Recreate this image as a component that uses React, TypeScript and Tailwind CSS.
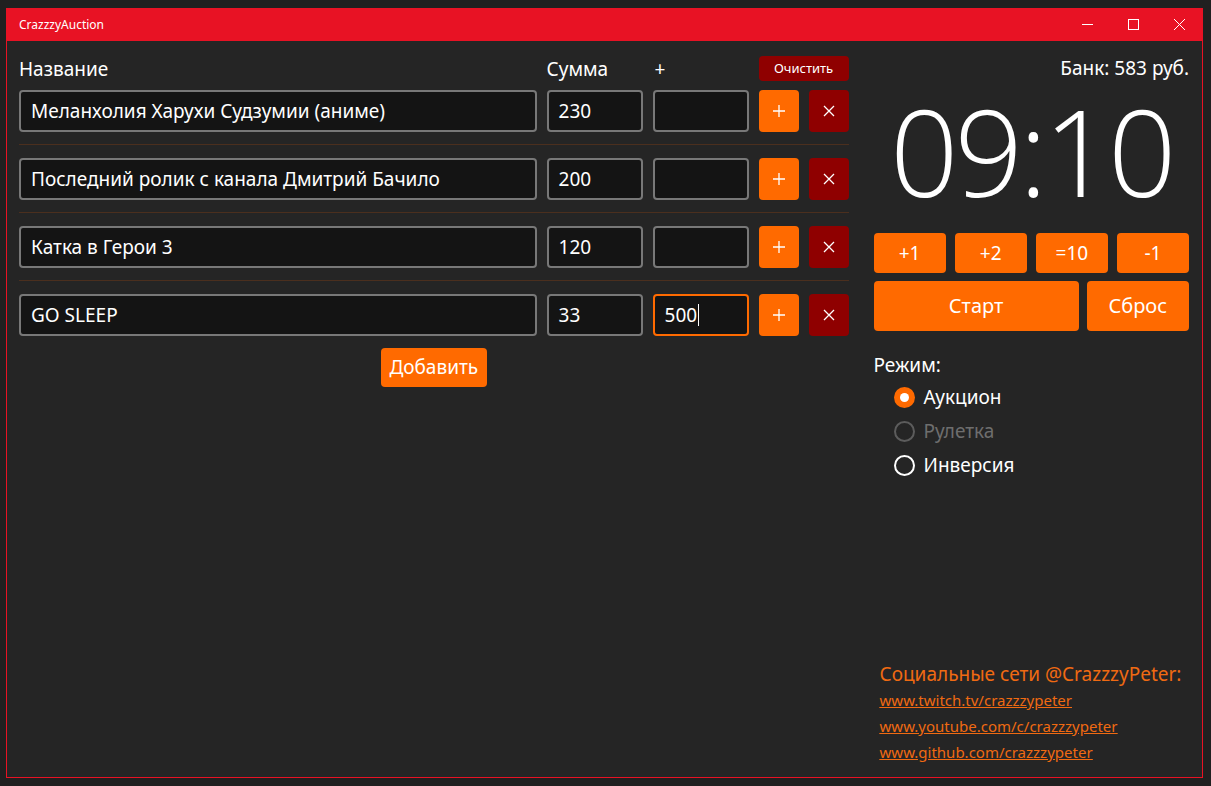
import React from "react";

const ORANGE = "bg-[#ff6a00]";

interface Lot {
  id: number;
  name: string;
  sum: string;
  add: string;
  focused?: boolean;
}

const lots: Lot[] = [
  { id: 1, name: "Меланхолия Харухи Судзумии (аниме)", sum: "230", add: "" },
  { id: 2, name: "Последний ролик с канала Дмитрий Бачило", sum: "200", add: "" },
  { id: 3, name: "Катка в Герои 3", sum: "120", add: "" },
  { id: 4, name: "GO SLEEP", sum: "33", add: "500", focused: true },
];

function Field({ value, focused, caret }: { value: string; focused?: boolean; caret?: boolean }) {
  return (
    <div
      className={`h-[42px] flex items-center px-[10px] rounded-[4px] border-2 bg-[#141414] text-[19px] text-white ${
        focused ? "border-[#ff6a00]" : "border-[#787878]"
      }`}
    >
      <span className="whitespace-nowrap">{value}</span>
      {caret && <span className="w-px h-[22px] bg-white ml-px" />}
    </div>
  );
}

function LotRow({ lot, last }: { lot: Lot; last: boolean }) {
  return (
    <div>
      <div className="grid grid-cols-[1fr_96px_96px_40px_40px] gap-[10px]">
        <Field value={lot.name} />
        <Field value={lot.sum} />
        <Field value={lot.add} focused={lot.focused} caret={lot.focused} />
        <button className={`h-[42px] rounded-[4px] ${ORANGE} flex items-center justify-center`}>
          <svg width="14" height="14" viewBox="0 0 14 14" stroke="white" strokeWidth="1.3">
            <path d="M7 1v12M1 7h12" />
          </svg>
        </button>
        <button className="h-[42px] rounded-[4px] bg-[#8f0000] flex items-center justify-center">
          <svg width="12" height="12" viewBox="0 0 12 12" stroke="white" strokeWidth="1.3">
            <path d="M1 1l10 10M11 1L1 11" />
          </svg>
        </button>
      </div>
      {!last && <div className="h-px bg-[#4b2f1e] mt-[12px] mb-[13px]" />}
    </div>
  );
}

function Radio({ label, state }: { label: string; state: "on" | "off" | "disabled" }) {
  return (
    <div className="h-[34px] flex items-center gap-[9px] pl-[20px]">
      {state === "on" ? (
        <span className="w-[21px] h-[21px] rounded-full bg-[#ff6a00] flex items-center justify-center">
          <span className="w-[9px] h-[9px] rounded-full bg-white" />
        </span>
      ) : (
        <span
          className={`w-[21px] h-[21px] rounded-full border-2 ${
            state === "disabled" ? "border-[#5c5c5c]" : "border-white"
          }`}
        />
      )}
      <span className={`text-[19px] ${state === "disabled" ? "text-[#6e6e6e]" : "text-white"}`}>{label}</span>
    </div>
  );
}

export default function App() {
  return (
    <div
      className="w-[1211px] h-[786px] bg-[#202020] pl-[6px] pt-[8px]"
      style={{ fontFamily: '"Noto Sans", "Open Sans", sans-serif' }}
    >
      <div className="w-[1197px] h-[770px] border border-[#e81224] border-t-0 bg-[#252525] flex flex-col">
        {/* Title bar */}
        <div className="h-[33px] bg-[#e81224] flex items-center justify-between text-white">
          <span className="pl-[12px] text-[12px]">CrazzzyAuction</span>
          <div className="flex items-center h-full">
            <div className="w-[46px] h-full flex items-center justify-center">
              <svg width="11" height="11" viewBox="0 0 11 11" stroke="white" strokeWidth="1">
                <path d="M0 5.5h11" />
              </svg>
            </div>
            <div className="w-[46px] h-full flex items-center justify-center">
              <svg width="11" height="11" viewBox="0 0 11 11" stroke="white" strokeWidth="1" fill="none">
                <rect x="0.5" y="0.5" width="10" height="10" />
              </svg>
            </div>
            <div className="w-[46px] h-full flex items-center justify-center">
              <svg width="11" height="11" viewBox="0 0 11 11" stroke="white" strokeWidth="1">
                <path d="M0 0l11 11M11 0L0 11" />
              </svg>
            </div>
          </div>
        </div>

        <div className="flex-1 flex pl-[12px] pr-[13px]">
          {/* Left panel */}
          <div className="w-[831px] pt-[12px]">
            <div className="grid grid-cols-[1fr_96px_96px_90px] gap-[10px] h-[25px] items-center text-white text-[19px]">
              <span className="pt-[2px]">Название</span>
              <span className="pt-[2px]">Сумма</span>
              <span className="pt-[2px] pl-[2px]">+</span>
              <button className="h-[25px] rounded-[4px] bg-[#8f0000] text-[13px] text-white">Очистить</button>
            </div>
            <div className="mt-[12px]">
              {lots.map((lot, i) => (
                <LotRow key={lot.id} lot={lot} last={i === lots.length - 1} />
              ))}
            </div>
            <div className="flex justify-center mt-[12px]">
              <button className={`w-[106px] h-[39px] rounded-[4px] ${ORANGE} text-white text-[19px]`}>Добавить</button>
            </div>
          </div>

          {/* Right panel */}
          <div className="ml-[25px] w-[316px] flex flex-col pt-[14px] pb-[12px]">
            <div className="text-right text-white text-[19px] leading-[26px]">Банк: 583 руб.</div>
            <div
              className="text-center text-white text-[120px] leading-[96px] font-light tracking-[-4px] mt-[22px] h-[124px]"
              style={{ fontFamily: '"Open Sans", sans-serif' }}
            >
              09:10
            </div>
            <div className="grid grid-cols-4 gap-[9px] mt-[6px]">
              {["+1", "+2", "=10", "-1"].map((t) => (
                <button key={t} className={`h-[40px] rounded-[4px] ${ORANGE} text-white text-[19px]`}>
                  {t}
                </button>
              ))}
            </div>
            <div className="grid grid-cols-[205px_1fr] gap-[8px] mt-[8px]">
              <button className={`h-[50px] rounded-[4px] ${ORANGE} text-white text-[20px]`}>Старт</button>
              <button className={`h-[50px] rounded-[4px] ${ORANGE} text-white text-[20px]`}>Сброс</button>
            </div>
            <div className="text-white text-[19px] mt-[21px] leading-[26px]">Режим:</div>
            <div className="mt-[2px]">
              <Radio label="Аукцион" state="on" />
              <Radio label="Рулетка" state="disabled" />
              <Radio label="Инверсия" state="off" />
            </div>
            <div className="mt-auto pl-[6px] text-[#f06a12]">
              <div className="text-[19px] leading-[26px]">Социальные сети @CrazzzyPeter:</div>
              <div className="flex flex-col text-[15px] leading-[26px] underline">
                <a>www.twitch.tv/crazzzypeter</a>
                <a>www.youtube.com/c/crazzzypeter</a>
                <a>www.github.com/crazzzypeter</a>
              </div>
            </div>
          </div>
        </div>
      </div>
    </div>
  );
}
